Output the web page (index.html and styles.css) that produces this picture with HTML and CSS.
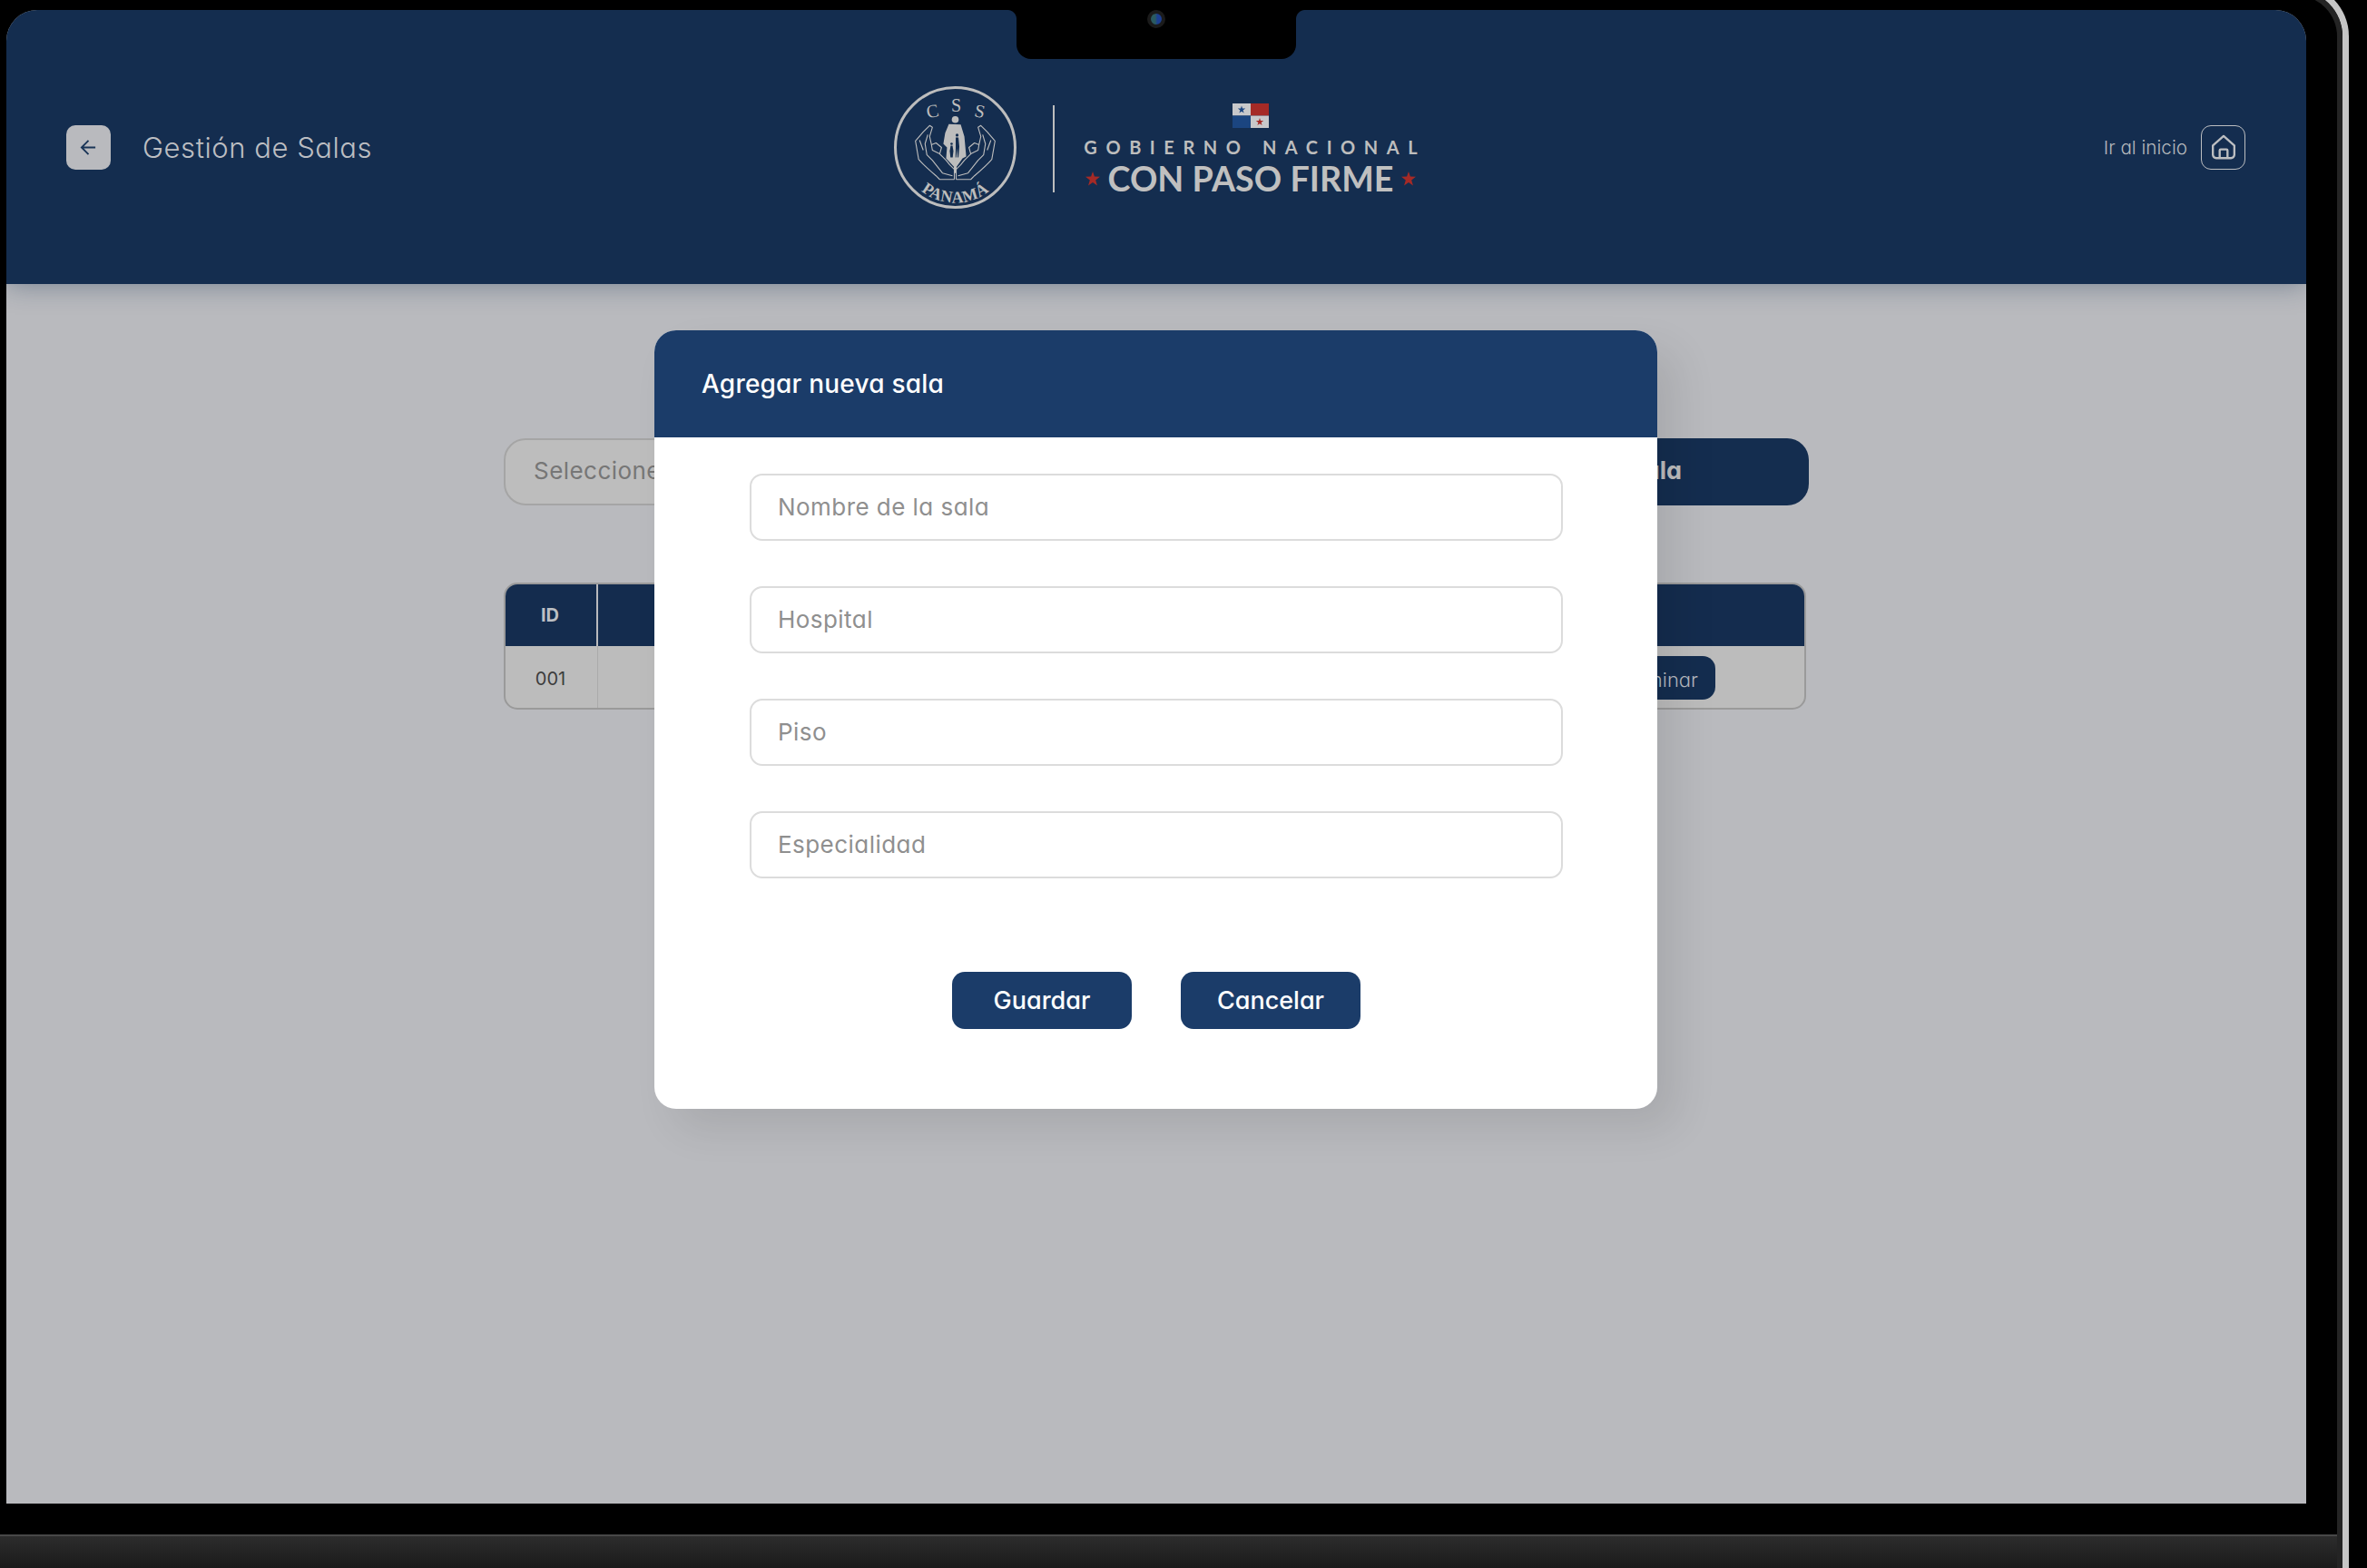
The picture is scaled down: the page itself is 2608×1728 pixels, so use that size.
FILE: index.html
```html
<!DOCTYPE html>
<html lang="es">
<head>
<meta charset="utf-8">
<title>Gestión de Salas</title>
<link rel="stylesheet" href="styles.css">
</head>
<body>
<div class="device">
  <div class="frame"><div class="frame-inner"></div></div>
  <div class="notch"><span class="lens"></span></div>
  <div class="screen">
    <header class="topbar">
      <div class="topbar-left">
        <button class="back-btn" aria-label="Volver">
          <svg class="back-icon" viewBox="0 0 20 20"><path d="M18 10H2M10 2L2 10L10 18"/></svg>
        </button>
        <span class="page-title">Gestión de Salas</span>
      </div>
      <div class="brand">
        <svg class="css-logo" viewBox="5 5 134 134">
          <circle class="ring" cx="72" cy="72" r="65.5"/>
          <text class="seal-letter" x="47" y="39" transform="rotate(-12 47 32)">C</text>
          <text class="seal-letter" x="73" y="33">S</text>
          <text class="seal-letter" x="99" y="39" transform="rotate(12 99 32)">S</text>
          <g class="hand">
            <path d="M71 107H55L51 103C44 97 37 91 32 85L28.5 65L37 55L44 48L47 50L44 60L46 69L51 67L57 72L55 79L62 86L66 91L71 96V107"/>
            <path d="M42 58L39 68L41 80L47 86L58 100L69 103"/>
            <path d="M46 69L47 75L55 79"/>
            <path d="M33 64L37 75"/>
          </g>
          <g class="hand" transform="translate(144 0) scale(-1 1)">
            <path d="M71 107H55L51 103C44 97 37 91 32 85L28.5 65L37 55L44 48L47 50L44 60L46 69L51 67L57 72L55 79L62 86L66 91L71 96V107"/>
            <path d="M42 58L39 68L41 80L47 86L58 100L69 103"/>
            <path d="M46 69L47 75L55 79"/>
            <path d="M33 64L37 75"/>
          </g>
          <circle class="silhouette" cx="72" cy="41.5" r="3.8"/>
          <path class="silhouette" d="M65 46.5L78 47L82 60L84 82L80 84L73.5 93V100H70.5V93L62 84L63 72L59 68L61 56Z"/>
          <g class="cutout">
            <circle cx="74" cy="58.5" r="1.6"/>
            <path d="M72.5 61H75.5L76.5 71L75.5 83H74.6L74 73L73.2 83H72.3L72.5 71Z"/>
            <circle cx="68" cy="68" r="1.3"/>
            <path d="M67 70H69L70 76L69.2 83H66.8L66 76Z"/>
          </g>
          <defs><path id="seal-arc" d="M16 94A60 60 0 0 0 128 94"/></defs>
          <text class="seal-name"><textPath href="#seal-arc" startOffset="50%" text-anchor="middle">PANAMÁ</textPath></text>
        </svg>
        <span class="brand-divider"></span>
        <div class="gov">
          <svg class="flag" viewBox="0 0 40 27">
            <rect class="flag-light" width="20" height="13.5"/>
            <rect class="flag-red" x="20" width="20" height="13.5"/>
            <rect class="flag-blue" y="13.5" width="20" height="13.5"/>
            <rect class="flag-light" x="20" y="13.5" width="20" height="13.5"/>
            <polygon class="flag-blue" points="10,2.6 11,5.6 14.2,5.6 11.6,7.5 12.6,10.6 10,8.7 7.4,10.6 8.4,7.5 5.8,5.6 9,5.6"/>
            <polygon class="flag-red" points="30,16.1 31,19.1 34.2,19.1 31.6,21 32.6,24.1 30,22.2 27.4,24.1 28.4,21 25.8,19.1 29,19.1"/>
          </svg>
          <span class="gov-line">GOBIERNO NACIONAL</span>
          <div class="slogan">
            <svg class="slogan-star" viewBox="0 0 20 20"><polygon points="10,0 12.4,7 20,7.2 14,11.8 16.2,19.4 10,15 3.8,19.4 6,11.8 0,7.2 7.6,7"/></svg>
            <span class="slogan-text">CON PASO FIRME</span>
            <svg class="slogan-star" viewBox="0 0 20 20"><polygon points="10,0 12.4,7 20,7.2 14,11.8 16.2,19.4 10,15 3.8,19.4 6,11.8 0,7.2 7.6,7"/></svg>
          </div>
        </div>
      </div>
      <div class="topbar-right">
        <span class="home-label">Ir al inicio</span>
        <a class="home-btn" aria-label="Ir al inicio">
          <svg class="home-icon" viewBox="0 0 26 26">
            <path d="M2 11.5L13 1.8L24 11.5V21A3.4 3.4 0 0 1 20.6 24.4H5.4A3.4 3.4 0 0 1 2 21Z"/>
            <path d="M9 24.4V16.4A1 1 0 0 1 10 15.4H16A1 1 0 0 1 17 16.4V24.4"/>
          </svg>
        </a>
      </div>
    </header>

    <main class="content">
      <div class="toolbar">
        <div class="select">Seleccione un hospital</div>
        <button class="add-btn">Agregar sala</button>
      </div>
      <div class="table">
        <div class="table-head">
          <div class="th id-col">ID</div>
          <div class="th rest-col"></div>
        </div>
        <div class="table-row">
          <div class="td id-col">001</div>
          <div class="td rest-col"><button class="delete-btn">Eliminar</button></div>
        </div>
      </div>
    </main>

    <section class="modal">
      <h2 class="modal-head">Agregar nueva sala</h2>
      <div class="modal-body">
        <div class="fields">
          <div class="field">Nombre de la sala</div>
          <div class="field">Hospital</div>
          <div class="field">Piso</div>
          <div class="field">Especialidad</div>
        </div>
        <div class="actions">
          <button class="modal-btn">Guardar</button>
          <button class="modal-btn">Cancelar</button>
        </div>
      </div>
    </section>
  </div>
  <div class="base"></div>
</div>
</body>
</html>
```
FILE: styles.css
```css
* { box-sizing: border-box; }
html, body { margin: 0; height: 100%; }
body {
  background: #000;
  overflow: hidden;
  font-family: Inter, "Noto Sans", sans-serif;
  font-feature-settings: "cv11" 1;
}
button { font: inherit; font-feature-settings: inherit; border: 0; }

.device {
  position: relative;
  width: 2608px;
  height: 1728px;
  padding-top: 11px;
  display: flex;
  flex-direction: column;
  overflow: hidden;
}
.frame {
  position: absolute;
  top: -18px;
  right: 20px;
  width: 240px;
  height: 1800px;
  border-top: 7px solid #c6c6c6;
  border-right: 7px solid #c6c6c6;
  border-top-right-radius: 58px;
}
.frame-inner {
  width: 100%;
  height: 100%;
  border-top: 6px solid #242424;
  border-right: 6px solid #242424;
  border-top-right-radius: 51px;
}
.notch {
  position: absolute;
  z-index: 5;
  top: 0;
  left: 1120px;
  width: 308px;
  height: 65px;
  background: #000;
  border-radius: 0 0 16px 16px;
  display: flex;
  justify-content: center;
}
.notch::before, .notch::after {
  content: "";
  position: absolute;
  top: 11px;
  width: 10px;
  height: 10px;
}
.notch::before { left: -10px; background: radial-gradient(circle at 0 100%, transparent 9.5px, #000 10.5px); }
.notch::after { right: -10px; background: radial-gradient(circle at 100% 100%, transparent 9.5px, #000 10.5px); }
.lens {
  width: 20px;
  height: 20px;
  margin-top: 11px;
  border-radius: 50%;
  border: 4px solid #1b1b1b;
  background: linear-gradient(90deg, #2a5a60 0 40%, #1c3f92 60%);
}

.screen {
  position: relative;
  width: 2534px;
  height: 1646px;
  margin-left: 7px;
  background: #b9babe;
  border-radius: 34px 34px 0 0;
  overflow: hidden;
}
.base {
  width: 2575px;
  height: 37px;
  margin-top: 34px;
  border-top: 2px solid #484848;
  background: linear-gradient(#2c2c2c, #1b1b1b);
}

.topbar {
  position: relative;
  height: 302px;
  padding: 0 67px 0 66px;
  display: grid;
  grid-template-columns: 1fr auto 1fr;
  align-items: center;
  background: #142d4f;
  box-shadow: 0 0 28px rgba(20, 45, 79, .42);
}
.topbar-left { display: flex; align-items: center; gap: 35px; }
.back-btn {
  width: 49px;
  height: 49px;
  padding: 0;
  display: flex;
  align-items: center;
  justify-content: center;
  background: #b9babe;
  border-radius: 10px;
}
.back-icon { width: 19px; height: 19px; fill: none; stroke: #1a3557; stroke-width: 2; }
.page-title { font-size: 31px; font-weight: 300; letter-spacing: .55px; color: #bcbec2; }

.brand { display: flex; align-items: center; }
.css-logo { width: 135px; height: 135px; }
.ring { fill: none; stroke: #bdbdbd; stroke-width: 3; }
.seal-letter { font: 20px "Liberation Serif", serif; fill: #bdbdbd; text-anchor: middle; }
.seal-name { font: bold 18px "Liberation Serif", serif; fill: #bdbdbd; letter-spacing: .3px; }
.hand { fill: none; stroke: #bdbdbd; stroke-width: 1.1; stroke-linejoin: round; }
.silhouette { fill: #bdbdbd; }
.cutout { fill: #142d4f; }
.brand-divider { width: 2px; height: 96px; margin: 3px 32px 0 40px; background: #bdbdbd; }
.gov { display: flex; flex-direction: column; align-items: center; margin-top: 8px; }
.flag { width: 40px; height: 27px; margin-bottom: 11px; }
.flag-light { fill: #c8c8ca; }
.flag-red { fill: #a52a26; }
.flag-blue { fill: #1b4580; }
.gov-line {
  font: 700 20px/20px Lato, sans-serif;
  color: #bdbdbd;
  letter-spacing: 9.55px;
  margin-right: -9.55px;
  white-space: nowrap;
}
.slogan { display: flex; align-items: center; gap: 9px; margin-top: 3px; }
.slogan-text { font: 700 37.7px/44px Lato, sans-serif; color: #c0c0c0; white-space: nowrap; }
.slogan-star { width: 16px; height: 16px; fill: #a52a26; }

.topbar-right { display: flex; align-items: center; justify-content: flex-end; gap: 15px; }
.home-label { font-size: 20.7px; font-weight: 300; color: #b5b8bc; }
.home-btn {
  width: 49px;
  height: 49px;
  display: flex;
  align-items: center;
  justify-content: center;
  border: 1.5px solid #bcbec1;
  border-radius: 11px;
}
.home-icon { width: 28px; height: 28px; fill: none; stroke: #bcbec1; stroke-width: 2.2; stroke-linejoin: round; }

.content { width: 1438px; margin-left: 548px; padding-top: 170px; }
.toolbar { display: flex; height: 74px; }
.select {
  flex: 1;
  display: flex;
  align-items: center;
  padding: 0 0 3px 31px;
  font-size: 26px;
  letter-spacing: .45px;
  color: #767676;
  background: #bdbdbd;
  border: 2px solid #a5a5a5;
  border-radius: 24px 0 0 24px;
}
.add-btn {
  width: 500px;
  padding: 0 140px 3px 0;
  text-align: right;
  font-size: 27px;
  font-weight: 700;
  color: #bdbdbd;
  background: #142d4f;
  border-radius: 0 24px 24px 0;
}
.table {
  width: 1435px;
  height: 140px;
  margin-top: 85px;
  border: 2px solid #9a9a9a;
  border-radius: 15px;
  background: #bcbcbc;
  overflow: hidden;
}
.table-head { display: flex; height: 68px; background: #142c4e; }
.table-row { display: flex; height: 70px; }
.id-col { width: 102px; display: flex; align-items: center; justify-content: center; }
.rest-col { flex: 1; }
.th { font-size: 20px; font-weight: 700; color: #bcbfc3; padding-right: 2px; }
.th.id-col { border-right: 2px solid #b9babe; }
.td { font-size: 20px; color: #3d3d3d; }
.td.id-col { border-right: 1px solid #aaa; padding: 2px 2px 0 0; }
.td.rest-col { display: flex; align-items: center; justify-content: flex-end; padding-right: 98px; }
.delete-btn {
  width: 240px;
  height: 48px;
  padding: 3px 19px 0 0;
  text-align: right;
  font-size: 22px;
  font-weight: 300;
  color: #b5b9bf;
  background: #142d4f;
  border-radius: 14px;
}

.modal {
  position: absolute;
  top: 353px;
  left: 714px;
  width: 1105px;
  height: 858px;
  border-radius: 24px;
  background: #fff;
  box-shadow: 22px 22px 46px rgba(0, 0, 0, .09);
}
.modal-head {
  height: 118px;
  margin: 0;
  padding-left: 52px;
  display: flex;
  align-items: center;
  font-size: 28px;
  font-weight: 500;
  letter-spacing: .2px;
  color: #fff;
  background: #1b3c69;
  border-radius: 24px 24px 0 0;
}
.modal-body { padding: 40px 104px 0 105px; }
.fields { display: flex; flex-direction: column; gap: 50px; }
.field {
  height: 74px;
  display: flex;
  align-items: center;
  padding: 0 0 2px 29px;
  font-size: 26px;
  letter-spacing: .45px;
  color: #8f8f8f;
  background: #fff;
  border: 2px solid #dcdcdc;
  border-radius: 14px;
}
.actions { display: flex; justify-content: center; gap: 54px; margin-top: 103px; }
.modal-btn {
  width: 198px;
  height: 63px;
  padding: 0;
  font-size: 27px;
  font-weight: 500;
  color: #fff;
  background: #1b3c69;
  border-radius: 14px;
}
```
